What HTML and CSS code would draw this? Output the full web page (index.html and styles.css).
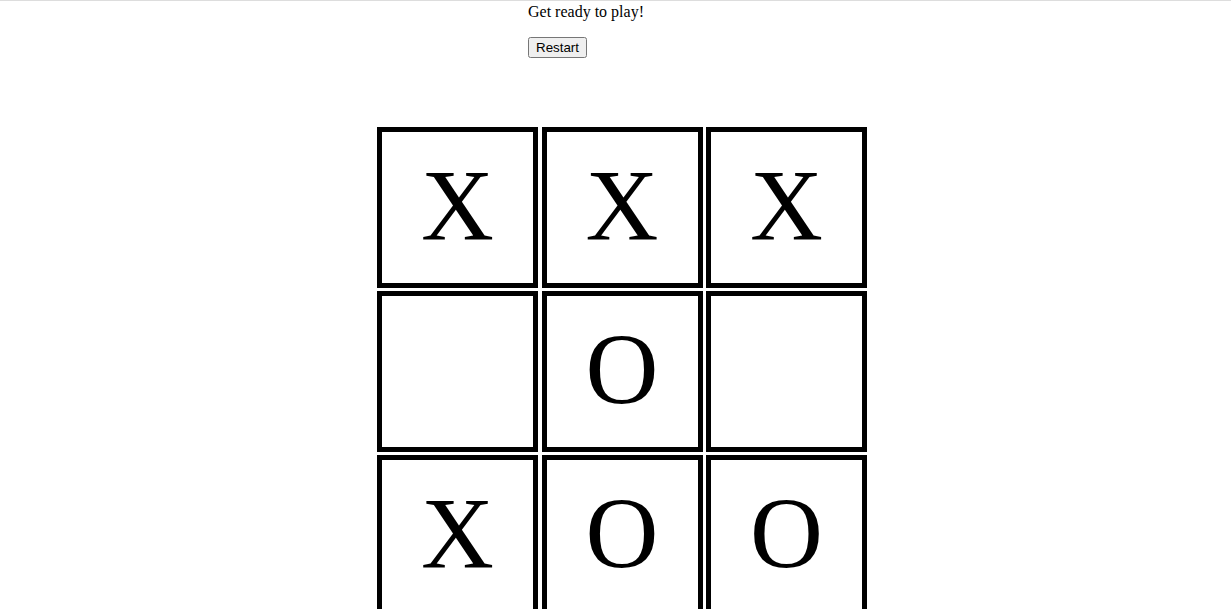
FILE: index.html
```html
<!DOCTYPE html>
<html lang="en">
<head>
<meta charset="utf-8">
<title>Tic Tac Toe</title>
<link rel="stylesheet" href="styles.css">
</head>
<body>
<div class="page">
  <div class="controls">
    <div class="status">Get ready to play!</div>
    <button class="restart" type="button">Restart</button>
  </div>
  <div class="board">
    <div class="cell">X</div>
    <div class="cell">X</div>
    <div class="cell">X</div>
    <div class="cell"></div>
    <div class="cell">O</div>
    <div class="cell"></div>
    <div class="cell">X</div>
    <div class="cell">O</div>
    <div class="cell">O</div>
  </div>
</div>
</body>
</html>
```

FILE: styles.css
```css
html {
  scrollbar-width: none;
}
body {
  margin: 0;
  font-family: "Liberation Serif", "Times New Roman", serif;
  font-size: 16px;
  color: #000;
  background: #fff;
}
.page {
  border-top: 1px solid #dddddd;
  display: flex;
  flex-direction: column;
}
.controls {
  margin-left: 528px;
  padding-top: 2px;
}
.status {
  line-height: 18px;
}
.restart {
  margin-top: 16px;
}
.board {
  margin-left: 377px;
  margin-top: 69px;
  display: grid;
  grid-template-columns: repeat(3, 161px);
  grid-auto-rows: 161px;
  column-gap: 3.5px;
  row-gap: 3px;
  width: max-content;
}
.cell {
  box-sizing: border-box;
  border: 5px solid #000;
  display: flex;
  align-items: center;
  justify-content: center;
  font-size: 101px;
  line-height: 1;
  padding-bottom: 3px;
}
```
